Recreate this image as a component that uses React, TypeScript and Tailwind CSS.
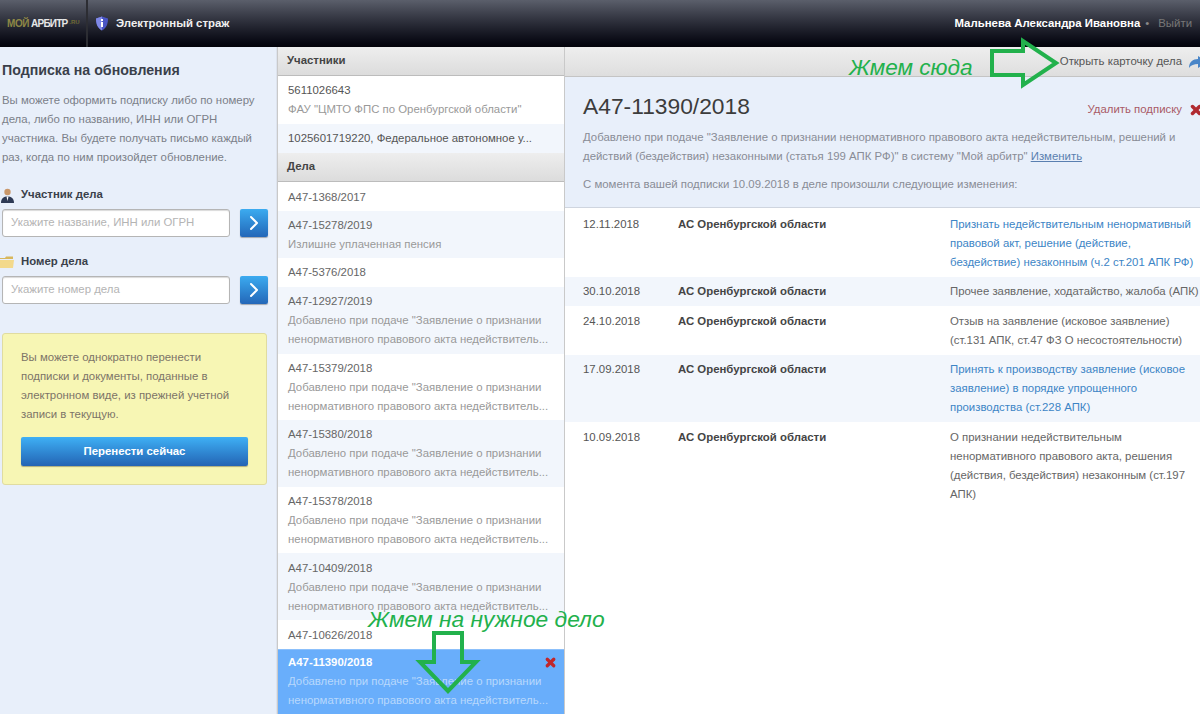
import { ChevronRight, X } from 'lucide-react'

const fontSans = { fontFamily: '"Liberation Sans", Arial, sans-serif' }
const desc = 'Добавлено при подаче "Заявление о признании ненормативного правового акта недействитель...'

const cases = [
  { num: 'А47-1368/2017', pt: 'pt-[6px]' },
  { num: 'А47-15278/2019', text: 'Излишне уплаченная пенсия', alt: true, h: 'h-[47px]' },
  { num: 'А47-5376/2018' },
  { num: 'А47-12927/2019', text: desc, alt: true },
  { num: 'А47-15379/2018', text: desc },
  { num: 'А47-15380/2018', text: desc, alt: true },
  { num: 'А47-15378/2018', text: desc },
  { num: 'А47-10409/2018', text: desc, alt: true, pt: 'pt-[6px]' },
  { num: 'А47-10626/2018', pt: 'pt-[6px]' },
]

const events = [
  {
    date: '12.11.2018',
    text: 'Признать недействительным ненормативный правовой акт, решение (действие, бездействие) незаконным (ч.2 ст.201 АПК РФ)',
    link: true,
    h: 'h-[69px] pt-[7px]',
  },
  { date: '30.10.2018', text: 'Прочее заявление, ходатайство, жалоба (АПК)', alt: true, h: 'h-[29px] pt-[5px]' },
  { date: '24.10.2018', text: 'Отзыв на заявление (исковое заявление) (ст.131 АПК, ст.47 ФЗ О несостоятельности)', h: 'h-[49px] pt-[6px]' },
  {
    date: '17.09.2018',
    text: 'Принять к производству заявление (исковое заявление) в порядке упрощенного производства (ст.228 АПК)',
    link: true,
    alt: true,
    h: 'h-[67px] pt-[5px]',
  },
  {
    date: '10.09.2018',
    text: 'О признании недействительным ненормативного правового акта, решения (действия, бездействия) незаконным (ст.197 АПК)',
    h: 'h-[88px] pt-[6px]',
  },
]

function SectionHead({ title }: { title: string }) {
  return (
    <div className="h-[29px] pl-[9px] flex items-center text-[11.4px] font-bold text-[#444] bg-gradient-to-b from-[#eeeeee] to-[#dcdcdc] border-b border-[#bcbcbc]">
      {title}
    </div>
  )
}

function SearchField({ placeholder }: { placeholder: string }) {
  return (
    <div className="flex items-center gap-[10px] pl-[2px]">
      <div className="w-[228px] h-[28px] bg-white rounded-[3px] border border-[#b5b5b5] shadow-[inset_0_1px_1px_rgba(0,0,0,0.15)] pl-[8px] flex items-center text-[11.4px] text-[#b4b4b4]">
        {placeholder}
      </div>
      <div className="w-[28px] h-[28px] rounded-[2px] bg-gradient-to-b from-[#3cabf0] to-[#2467b8] flex items-center justify-center shadow-[0_1px_1px_rgba(0,0,0,0.3)]">
        <ChevronRight className="w-[24px] h-[24px] text-white" strokeWidth={2} />
      </div>
    </div>
  )
}

export default function App() {
  return (
    <div className="relative w-[1200px] h-[714px] overflow-hidden bg-white flex flex-col" style={fontSans}>
      {/* Header */}
      <div className="h-[47px] shrink-0 flex items-center bg-gradient-to-b from-[#5b5f6b] to-[#03030a]">
        <div className="w-[88px] h-full flex items-center pl-[7px] border-r-2 border-[#2c2d33]">
          <span className="text-[10px] font-bold tracking-[-0.4px] text-[#8d8745]">МОЙ</span>
          <span className="text-[10px] font-bold tracking-[-0.8px] text-[#e6e6e6] ml-[2px]">АРБИТР</span>
          <span className="text-[6px] font-bold text-[#6f6a35] ml-[2px] -mt-[3px]">.RU</span>
        </div>
        <div className="flex items-center pl-[7px] gap-[7px]">
          <svg width="14" height="15" viewBox="0 0 14 15">
            <path d="M7 0.5 L13 2.5 C13 8 11.5 12 7 14.5 C2.5 12 1 8 1 2.5 Z" fill="#4a55c4" />
            <path d="M7 0.5 L7 14.5 C2.5 12 1 8 1 2.5 Z" fill="#7f88e6" />
            <rect x="6" y="6" width="2" height="5" fill="#fff" />
            <rect x="6" y="3" width="2" height="2" fill="#fff" />
          </svg>
          <span className="text-[11.4px] font-bold text-[#f0f0f0]">Электронный страж</span>
        </div>
        <div className="ml-auto flex items-center pr-[8px] text-[11.4px]">
          <span className="font-bold text-white">Мальнева Александра Ивановна</span>
          <span className="text-[#888] ml-[5px] mr-[9px]">•</span>
          <span className="text-[#777]">Выйти</span>
        </div>
      </div>

      <div className="flex-1 flex min-h-0">
        {/* Left panel */}
        <div className="w-[277px] shrink-0 bg-[#e8effa] border-r border-[#dde3ee]">
          <div className="pl-[2px] pt-[15px] text-[14.2px] font-bold text-[#3a3f4a] leading-[16px]">Подписка на обновления</div>
          <p className="pl-[2px] pt-[13px] pr-[8px] text-[11.4px] leading-[19px] text-[#7b7f89]">
            Вы можете оформить подписку либо по номеру дела, либо по названию, ИНН или ОГРН участника. Вы будете получать письмо каждый раз, когда по ним произойдет обновление.
          </p>
          <div className="mt-[16px] h-[24px] flex items-center gap-[6px] text-[11.4px] font-bold text-[#3a3f4a]">
            <svg width="15" height="15" viewBox="0 0 15 15">
              <circle cx="7.5" cy="4" r="3.2" fill="#c9986b" />
              <path d="M1 15 C1 10 4 8.5 7.5 8.5 C11 8.5 14 10 14 15 Z" fill="#2e3a55" />
              <path d="M6.5 8.5 L8.5 8.5 L7.5 13 Z" fill="#fff" />
            </svg>
            Участник дела
          </div>
          <div className="mt-[2px]">
            <SearchField placeholder="Укажите название, ИНН или ОГРН" />
          </div>
          <div className="mt-[13px] h-[24px] flex items-center gap-[6px] text-[11.4px] font-bold text-[#3a3f4a]">
            <svg width="15" height="12" viewBox="0 0 15 12">
              <path d="M0 2 L5 2 L6 0.5 L13 0.5 L13 3 L0 3 Z" fill="#d8b75c" />
              <path d="M0 4 L14 4 L13 12 L0 12 Z" fill="#f3d98b" />
            </svg>
            Номер дела
          </div>
          <div className="mt-[2px]">
            <SearchField placeholder="Укажите номер дела" />
          </div>
          <div className="mt-[29px] ml-[2px] w-[265px] h-[152px] rounded-[3px] bg-[#f7f6b4] border border-[#e0dca0] pl-[18px] pr-[16px] pt-[14px]">
            <p className="text-[11.4px] leading-[19px] text-[#7c7468]">
              Вы можете однократно перенести подписки и документы, поданные в электронном виде, из прежней учетной записи в текущую.
            </p>
            <div className="mt-[13px] w-[227px] h-[29px] rounded-[2px] bg-gradient-to-b from-[#3fb0f5] to-[#2464b4] flex items-center justify-center text-[11.4px] font-bold text-white shadow-[0_1px_1px_rgba(0,0,0,0.3)]">
              Перенести сейчас
            </div>
          </div>
        </div>

        {/* Middle list */}
        <div className="w-[288px] shrink-0 border-r border-[#c9c9c9] border-l overflow-hidden bg-white">
          <SectionHead title="Участники" />
          <div className="h-[48px] pl-[10px] pt-[5px] text-[11.4px] leading-[19px]">
            <div className="text-[#555]">5611026643</div>
            <div className="text-[#999]">ФАУ "ЦМТО ФПС по Оренбургской области"</div>
          </div>
          <div className="h-[29px] pl-[10px] flex items-center text-[11.4px] text-[#555] bg-[#f2f6fc]">
            1025601719220, Федеральное автономное у...
          </div>
          <SectionHead title="Дела" />
          {cases.map((c) => (
            <div
              key={c.num}
              className={`pl-[10px] pr-[8px] text-[11.4px] leading-[19px] ${c.pt ?? 'pt-[5px]'} ${c.alt ? 'bg-[#f2f6fc]' : 'bg-white'} ${c.text ? c.h ?? 'h-[66.6px]' : 'h-[29px]'}`}
            >
              <div className="text-[#666]">{c.num}</div>
              {c.text && <div className="text-[#999]">{c.text}</div>}
            </div>
          ))}
          <div className="relative h-[66px] pl-[10px] pr-[8px] pt-[3px] text-[11.4px] leading-[19px] bg-[#69aefb] border-t border-[#8cc0fb]">
            <div className="font-bold text-white">А47-11390/2018</div>
            <div className="text-[#b8d8fb]">{desc}</div>
            <X className="absolute right-[7px] top-[6px] w-[13px] h-[13px] text-[#c0262a]" strokeWidth={6} />
          </div>
        </div>

        {/* Case details */}
        <div className="flex-1 min-w-0">
          <div className="h-[30px] flex items-center justify-end bg-gradient-to-b from-[#eeeeee] to-[#dedede] border-b border-[#c4c4c4] text-[11.4px] text-[#555]">
            <span>Открыть карточку дела</span>
            <svg width="18" height="14" viewBox="0 0 18 14" className="ml-[7px] -mr-[7px]">
              <path d="M0 13 C0 7 4 4 9 4 L9 1 L18 7 L9 13 L9 9 C5 9 2 10 0 13 Z" fill="#4a86c8" />
            </svg>
          </div>
          <div className="h-[131px] bg-[#e8effa] pl-[18px] pr-[16px] pt-[16px] border-b border-[#cfd5df]">
            <div className="flex items-center justify-between">
              <span className="text-[22.8px] leading-[26px] text-[#3c3c3c]">А47-11390/2018</span>
              <span className="flex items-center gap-[7px] pt-[8px] text-[11.4px] text-[#a85a66] -mr-[19px]">
                Удалить подписку
                <X className="w-[14px] h-[14px] text-[#b02a30]" strokeWidth={6} />
              </span>
            </div>
            <p className="mt-[9px] text-[11.4px] leading-[19px] text-[#888c96]">
              Добавлено при подаче "Заявление о признании ненормативного правового акта недействительным, решений и действий (бездействия) незаконными (статья 199 АПК РФ)" в систему "Мой арбитр" <span className="underline text-[#5a7fb0]">Изменить</span>
            </p>
            <p className="mt-[9px] text-[11.4px] leading-[19px] text-[#888c96]">
              С момента вашей подписки 10.09.2018 в деле произошли следующие изменения:
            </p>
          </div>
          {events.map((e) => (
            <div key={e.date} className={`flex pl-[18px] text-[11.4px] leading-[19px] ${e.h} ${e.alt ? 'bg-[#f2f6fc]' : 'bg-white'}`}>
              <div className="w-[95px] shrink-0 text-[#555]">{e.date}</div>
              <div className="w-[272px] shrink-0 font-bold text-[#444]">АС Оренбургской области</div>
              <div className={`w-[254px] shrink-0 ${e.link ? 'text-[#3d85c6]' : 'text-[#666]'}`}>{e.text}</div>
            </div>
          ))}
        </div>
      </div>

      {/* Annotations drawn over the screenshot */}
      <span className="absolute left-[849px] top-[54px] text-[22.6px] leading-[28px] italic text-[#22b14c]">Жмем сюда</span>
      <span className="absolute left-[368px] top-[605px] text-[22.8px] leading-[28px] italic text-[#22b14c]">Жмем на нужное дело</span>
      <svg className="absolute left-[985px] top-[36px]" width="76" height="54" viewBox="0 0 76 54">
        <path d="M7 15 L38 15 L38 5 L71 27 L38 49 L38 39 L7 39 Z" fill="none" stroke="#22b14c" strokeWidth="4" />
      </svg>
      <svg className="absolute left-[415px] top-[625px]" width="66" height="72" viewBox="0 0 66 72">
        <path d="M19 8 L47 8 L47 37 L61 37 L33 66 L5 37 L19 37 Z" fill="none" stroke="#22b14c" strokeWidth="4" />
      </svg>
    </div>
  )
}
